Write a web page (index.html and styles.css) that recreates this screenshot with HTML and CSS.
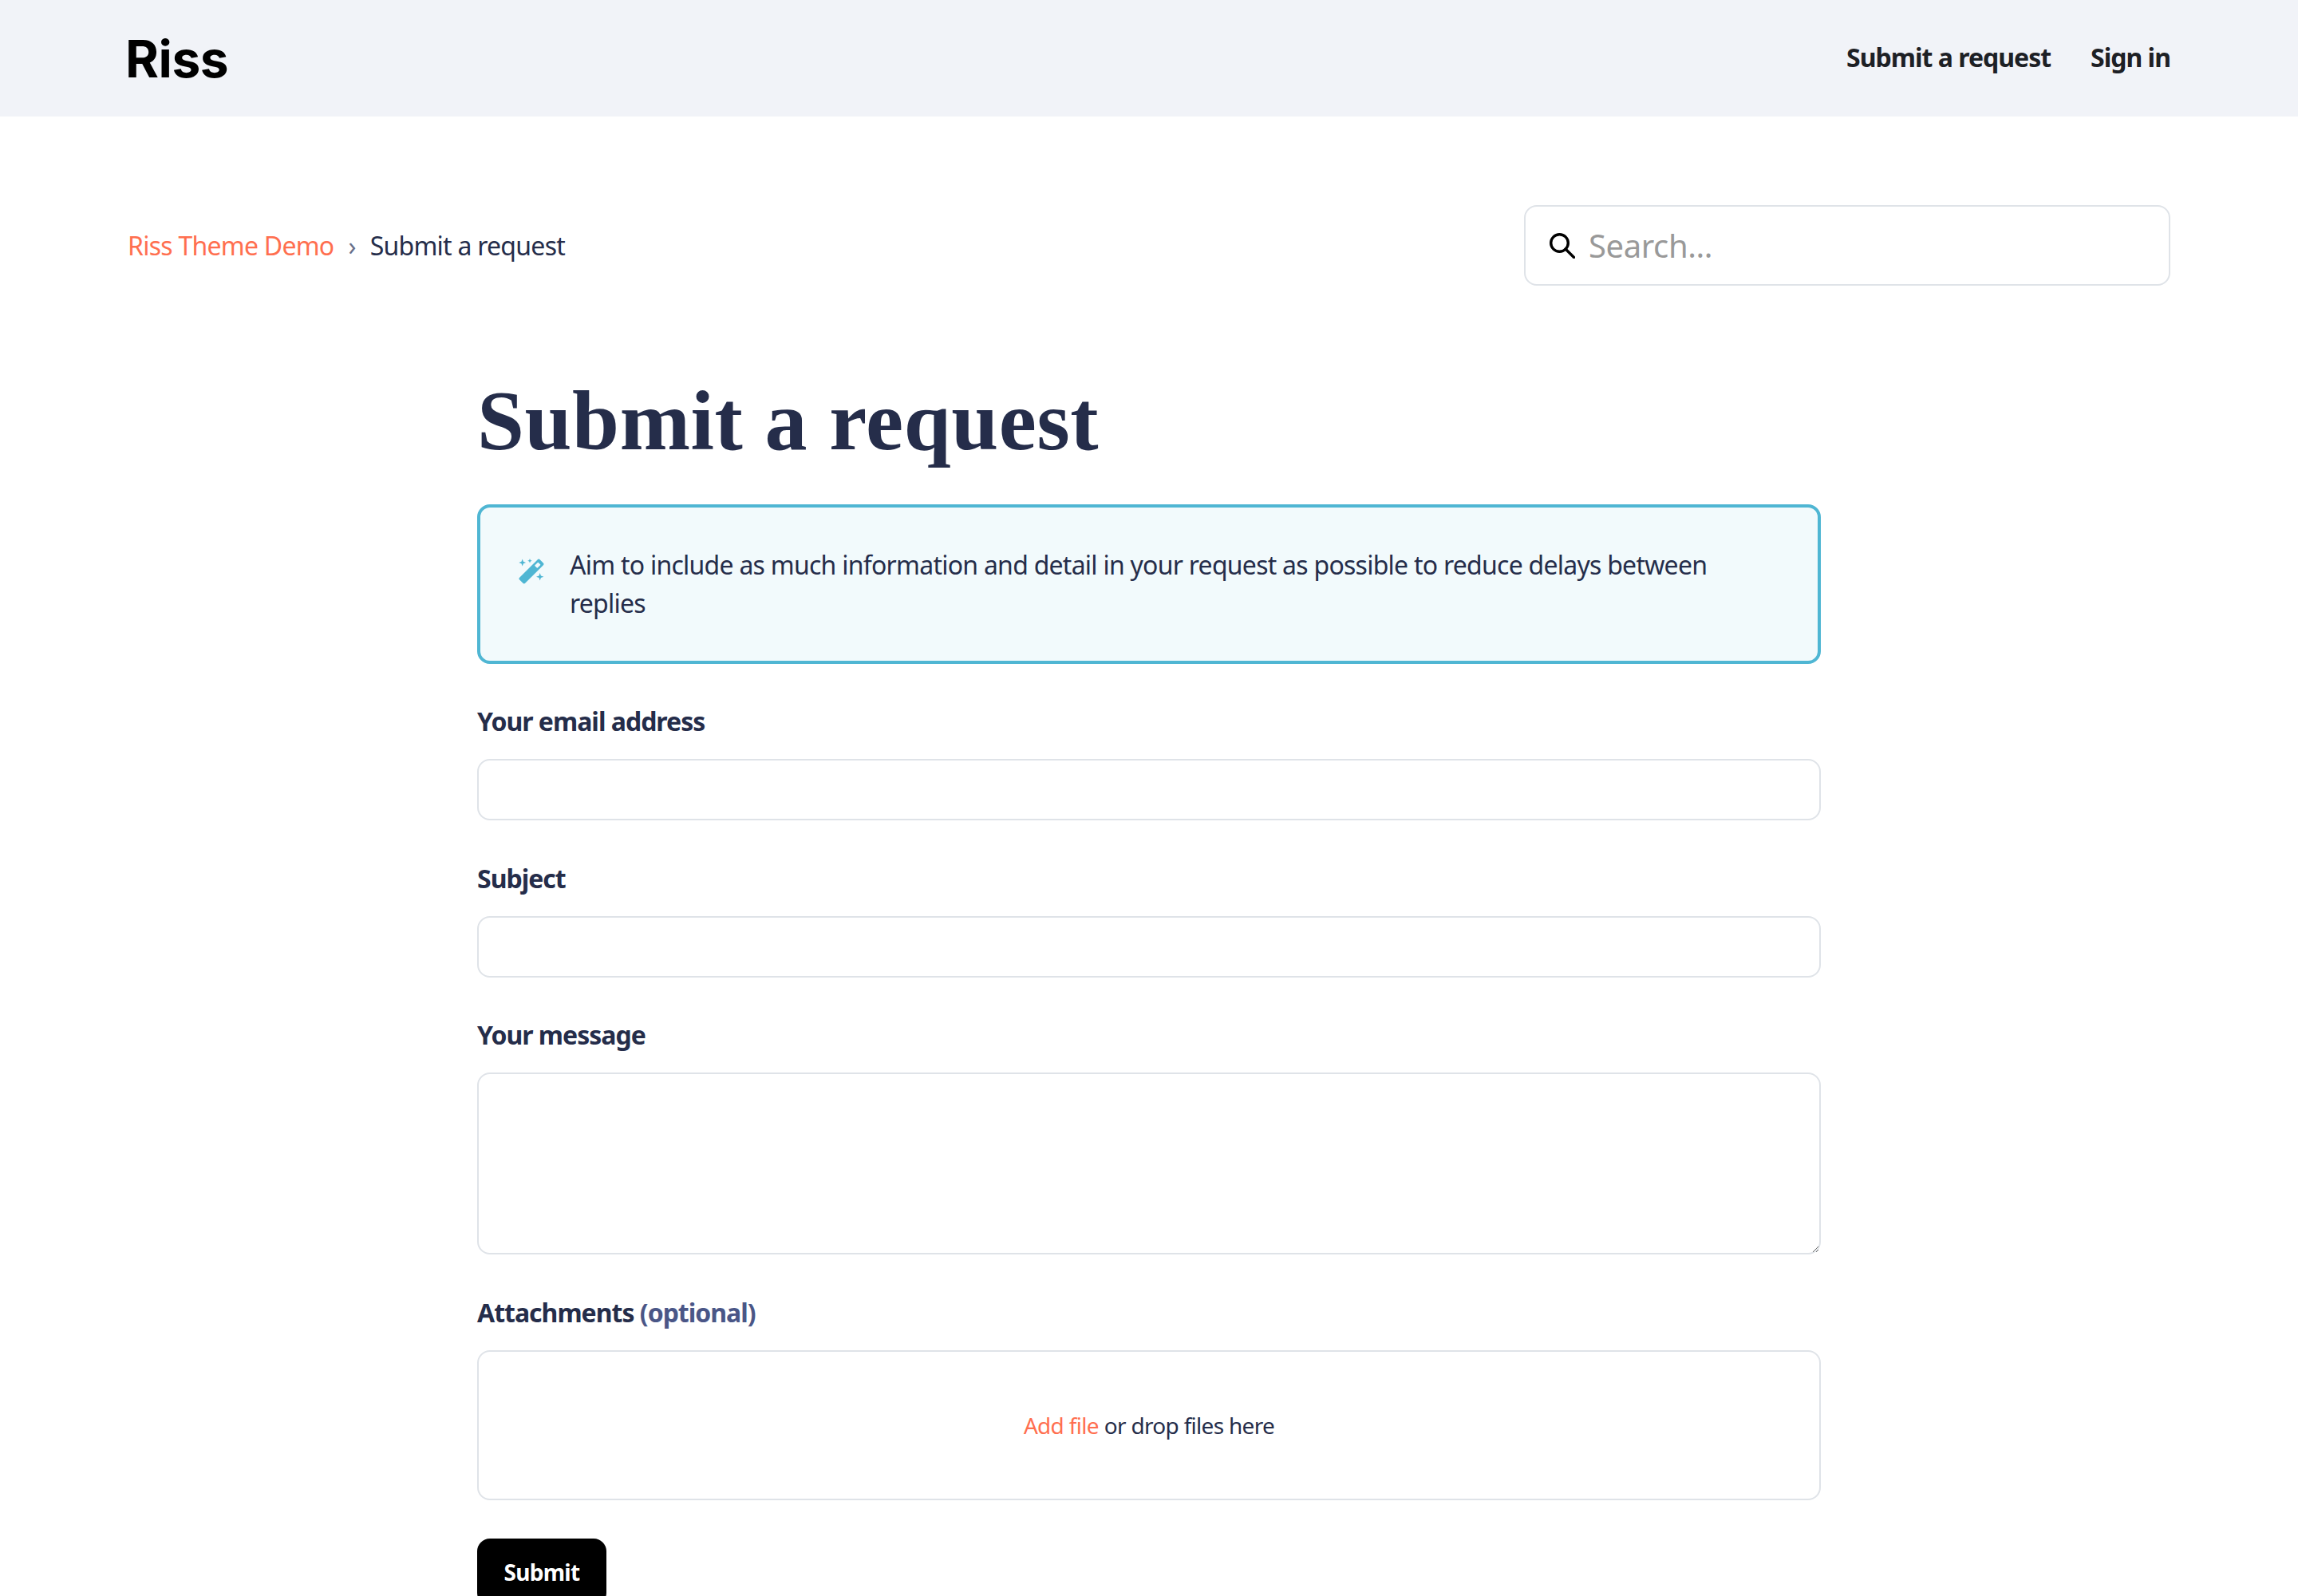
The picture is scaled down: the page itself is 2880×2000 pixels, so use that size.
FILE: index.html
```html
<!DOCTYPE html>
<html lang="en">
<head>
    <meta charset="UTF-8">
    <meta name="viewport" content="width=device-width, initial-scale=1.0">
    <title>Submit a request</title>
    <link rel="stylesheet" href="styles.css">
</head>
<body>
    <header class="site-header">
        <div class="container header-inner">
            <a class="logo" href="#">Riss</a>
            <nav class="header-nav">
                <a href="#">Submit a request</a>
                <a href="#">Sign in</a>
            </nav>
        </div>
    </header>

    <div class="container sub-nav">
        <ol class="breadcrumbs">
            <li><a href="#">Riss Theme Demo</a></li>
            <li class="sep">›</li>
            <li>Submit a request</li>
        </ol>
        <form class="search">
            <svg class="search-icon" viewBox="0 0 32 32" fill="none" stroke="#000" stroke-width="3.4" stroke-linecap="round">
                <circle cx="12.500" cy="12.500" r="10.800"/>
                <path d="M20 20 30.500 30.500"/>
            </svg>
            <input type="search" placeholder="Search...">
        </form>
    </div>

    <main class="request">
        <h1>Submit a request</h1>

        <div class="notice">
            <svg class="notice-icon" viewBox="0 0 32 32" fill="#4fb6d3">
                <rect x="-2" y="11" width="36" height="10" rx="2" transform="rotate(-45 16 16)"/>
                <rect x="24" y="13.700" width="6" height="4.600" rx="0.6" fill="#f2fafc" transform="rotate(-45 16 16)"/>
                <path d="M4.700 .6l1.200 3.200 3.200 1.200-3.200 1.200-1.200 3.200-1.200-3.200L.3 5l3.200-1.200z"/>
                <path d="M14 0l.8 2 2 .8-2 .8-.8 2-.8-2-2-.8 2-.8z"/>
                <path d="M26.700 18l1.200 3.500 3.500 1.200-3.500 1.200-1.200 3.500-1.200-3.500-3.500-1.200 3.500-1.200z"/>
            </svg>
            <p>Aim to include as much information and detail in your request as possible to reduce delays between replies</p>
        </div>

        <div class="field">
            <label for="email">Your email address</label>
            <input id="email" type="text">
        </div>
        <div class="field">
            <label for="subject">Subject</label>
            <input id="subject" type="text">
        </div>
        <div class="field">
            <label for="message">Your message</label>
            <textarea id="message"></textarea>
        </div>
        <div class="field field-last">
            <label>Attachments <span class="optional">(optional)</span></label>
            <div class="dropzone"><a href="#">Add file</a> or drop files here</div>
        </div>

        <button class="submit" type="submit">Submit</button>
    </main>
</body>
</html>
```

FILE: styles.css
```css
* {
    box-sizing: border-box;
}
body {
    margin: 0;
    font-family: "Noto Sans", Roboto, sans-serif;
    font-size: 32px;
    letter-spacing: -0.75px;
    color: #252d4a;
    background-color: #fff;
}
a {
    color: #ff6f4f;
    text-decoration: none;
}
.container {
    width: 2560px;
    margin: 0 auto;
}

/* header */
.site-header {
    background-color: #f1f3f8;
    height: 146px;
}
.header-inner {
    height: 100%;
    display: flex;
    justify-content: space-between;
    align-items: center;
}
.logo {
    font-family: Inter, sans-serif;
    font-weight: 700;
    font-size: 64px;
    letter-spacing: -0.5px;
    color: #000;
    margin-left: -3px;
}
.header-nav {
    display: flex;
    gap: 50px;
    margin-bottom: 3px;
}
.header-nav a {
    font-weight: 700;
    letter-spacing: -1px;
    color: #1d2025;
}

/* breadcrumbs + search */
.sub-nav {
    display: flex;
    justify-content: space-between;
    align-items: center;
    margin-top: 111px;
}
.breadcrumbs {
    list-style: none;
    display: flex;
    gap: 18px;
    margin: 0;
    padding: 0;
}
.sep {
    color: #68708a;
}
.search {
    width: 810px;
    height: 101px;
    display: flex;
    align-items: center;
    gap: 17px;
    padding: 0 30px;
    border: 2px solid #dfe3e8;
    border-radius: 16px;
}
.search-icon {
    width: 32px;
    height: 32px;
    flex: none;
}
.search input {
    flex: 1;
    border: 0;
    outline: 0;
    padding: 0;
    font-family: inherit;
    font-size: 40px;
    letter-spacing: -0.4px;
    color: #252d4a;
}
.search input::placeholder {
    color: #999;
    opacity: 1;
}

/* form */
.request {
    width: 1684px;
    margin: 0 auto;
    padding-top: 110px;
}
h1 {
    font-family: "Liberation Serif", serif;
    font-weight: 700;
    font-size: 106px;
    line-height: 120px;
    letter-spacing: 0.6px;
    margin: 0 0 44px;
    color: #252d4a;
}
.notice {
    display: flex;
    align-items: flex-start;
    gap: 32px;
    height: 200px;
    padding: 48px 48px 0;
    border: 4px solid #4fb6d3;
    border-radius: 16px;
    background-color: #f2fafc;
    margin-bottom: 50px;
}
.notice-icon {
    width: 32px;
    height: 32px;
    flex: none;
    margin-top: 16px;
}
.notice p {
    margin: 0;
    line-height: 48px;
}
.field {
    margin-bottom: 50.5px;
}
.field-last {
    margin-bottom: 48px;
}
.field label {
    display: block;
    font-weight: 700;
    letter-spacing: -1px;
    line-height: 44px;
    margin-bottom: 25px;
}
.optional {
    color: #4a5687;
}
.field input,
.field textarea {
    display: block;
    width: 100%;
    height: 77px;
    border: 2px solid #dfe3e8;
    border-radius: 16px;
    outline: 0;
    padding: 16px;
    font-family: inherit;
    font-size: 32px;
}
.field textarea {
    height: 228px;
}
.dropzone {
    height: 188px;
    display: flex;
    justify-content: center;
    align-items: center;
    gap: 7px;
    border: 2px solid #dfe3e8;
    border-radius: 16px;
    font-size: 28px;
    letter-spacing: -0.7px;
}
.submit {
    display: block;
    width: 162px;
    height: 84px;
    border: 0;
    border-radius: 16px;
    background-color: #000;
    color: #fff;
    font-family: inherit;
    font-weight: 700;
    font-size: 28px;
    letter-spacing: -0.7px;
}
```
